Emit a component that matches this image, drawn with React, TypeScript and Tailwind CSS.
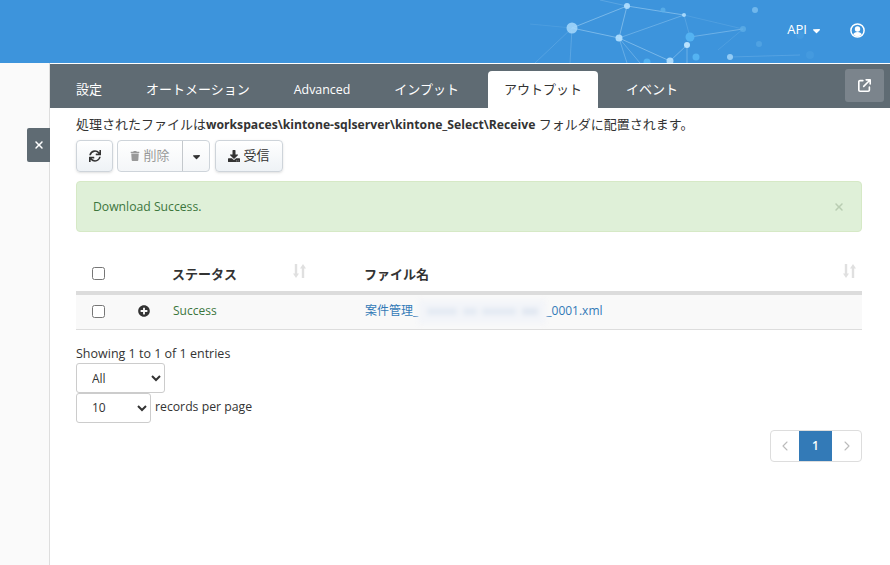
import React from "react";
import { FaSync, FaTrash, FaDownload, FaPlusCircle } from "react-icons/fa";
import { FaCaretDown, FaArrowUpRightFromSquare, FaXmark } from "react-icons/fa6";
import { ChevronLeft, ChevronRight } from "lucide-react";

const tabs = ["設定", "オートメーション", "Advanced", "インプット", "アウトプット", "イベント"];

const font = "font-['Open_Sans','Noto_Sans_CJK_JP',sans-serif]";

// background of the header: small network of dots and lines
const dots: [number, number, number, string, number][] = [
  [572, 28, 5.5, "#a6d8fb", 0.85],
  [627, 6, 3, "#b4e0ff", 0.9],
  [619, 38, 3.5, "#b4e0ff", 0.9],
  [684, 15, 2, "#b4e0ff", 0.85],
  [663, 10, 2.5, "#5cb0ea", 0.8],
  [690, 37, 4.5, "#55b4f2", 0.95],
  [687, 45, 3, "#c0e6ff", 0.95],
  [743, 29, 3, "#5cace6", 0.8],
  [755, 10, 3, "#86c6f2", 0.7],
  [696, 57, 3.5, "#55b4f2", 0.95],
  [670, 61, 3.5, "#b4e0ff", 0.9],
  [647, 62, 3.5, "#55b4f2", 0.9],
  [730, 57, 3, "#a6d8fb", 0.8],
  [759, 44, 3, "#5cace6", 0.6],
  [810, 55, 4, "#5cace6", 0.25],
  [800, 35, 4, "#5cace6", 0.25],
];
const lines: [number, number, number, number, number][] = [
  [572, 28, 627, 6, 0.5],
  [572, 28, 619, 38, 0.5],
  [627, 6, 619, 38, 0.5],
  [627, 6, 684, 15, 0.5],
  [619, 38, 684, 15, 0.35],
  [690, 37, 743, 29, 0.4],
  [684, 15, 743, 29, 0.15],
  [684, 15, 690, 37, 0.2],
  [619, 38, 670, 61, 0.5],
  [619, 38, 627, 63, 0.35],
  [619, 38, 640, 63, 0.35],
  [687, 45, 670, 61, 0.45],
  [687, 45, 687, 63, 0.4],
  [730, 57, 800, 55, 0.2],
  [743, 29, 718, 50, 0.15],
  [572, 28, 570, 63, 0.25],
  [572, 28, 535, 63, 0.2],
  [572, 28, 530, 24, 0.12],
  [627, 6, 600, 0, 0.25],
];

const App = () => {
  return (
    <div className={`${font} h-[565px] w-[890px] overflow-hidden bg-white text-[13px] text-[#333]`}>
      {/* Header */}
      <header className="relative flex h-[63px] items-center justify-end bg-[#3d94dc] text-white">
        <svg className="absolute inset-0 h-[63px] w-[890px] blur-[0.4px]" viewBox="0 0 890 63">
          {lines.map((l, i) => (
            <line key={i} x1={l[0]} y1={l[1]} x2={l[2]} y2={l[3]} stroke="#b4dcf8" strokeOpacity={l[4]} strokeWidth="1" />
          ))}
          {dots.map((d, i) => (
            <circle key={i} cx={d[0]} cy={d[1]} r={d[2]} fill={d[3]} fillOpacity={d[4]} />
          ))}
        </svg>
        <div className="relative flex items-center pb-[3px] pr-[25px]">
          <span className="text-[13px]">API</span>
          <FaCaretDown className="ml-[4px] text-[11px]" />
          <UserIcon />
        </div>
      </header>

      <div className="flex h-[502px]">
        {/* Left gutter */}
        <div className="relative w-[50px] shrink-0 border-r border-[#dedede] bg-[#fafafa] pt-px">
          <button className="absolute left-[27px] top-[65px] flex h-[34px] w-[23px] items-center justify-center rounded-l-[2px] bg-[#5f6b73] text-white">
            <FaXmark className="text-[12px]" />
          </button>
        </div>

        <main className="min-w-0 flex-1 pt-px">
          {/* Tabs */}
          <nav className="flex h-[44px] items-end justify-between bg-[#5f6b73] pl-[10px] pr-[6px]">
            <ul className="flex gap-[12px]">
              {tabs.map((t) => (
                <li
                  key={t}
                  className={
                    t === "アウトプット"
                      ? "ml-px flex h-[37px] items-center rounded-t-[4px] bg-white px-[16px] text-[#333]"
                      : t === "Advanced"
                        ? "flex h-[37px] items-center px-[16px] pt-px text-[12.4px] text-white"
                        : "flex h-[37px] items-center px-[16px] pt-px text-white"
                  }
                >
                  {t}
                </li>
              ))}
            </ul>
            <button className="mb-[6px] flex h-[33px] w-[39px] items-center justify-center rounded-[3px] bg-[#7b848c] text-white">
              <FaArrowUpRightFromSquare className="text-[13px]" />
            </button>
          </nav>

          <div className="px-[26px] pr-[28px]">
            <p className="h-[32px] pt-[7px] leading-[18px]">
              処理されたファイルは<b className="text-[12.2px]">workspaces\kintone-sqlserver\kintone_Select\Receive</b> フォルダに配置されます。
            </p>

            {/* Toolbar */}
            <div className="flex gap-[4px]">
              <button className="flex h-[32px] w-[37px] items-center justify-center rounded-[4px] border border-[#ced4da] bg-gradient-to-b from-white to-[#eef2f6] shadow-sm">
                <FaSync className="text-[12px]" />
              </button>
              <div className="flex h-[32px] rounded-[4px] border border-[#ced4da] bg-gradient-to-b from-white to-[#f4f6f8]">
                <span className="flex w-[65px] items-center justify-center gap-[3px] border-r border-[#c4c8cc] text-[#999]">
                  <FaTrash className="text-[10px]" />
                  削除
                </span>
                <span className="flex w-[26px] items-center justify-center">
                  <FaCaretDown className="text-[11px]" />
                </span>
              </div>
              <button className="ml-px flex h-[32px] w-[68px] items-center justify-center gap-[3px] rounded-[4px] border border-[#ced4da] bg-gradient-to-b from-white to-[#eef2f6] shadow-sm">
                <FaDownload className="text-[12px]" />
                受信
              </button>
            </div>

            {/* Alert */}
            <div className="mt-[9px] flex h-[51px] items-center justify-between rounded-[4px] border border-[#d6e9c6] bg-[#dff0d8] pl-[16px] pr-[16px] pt-px text-[12.2px] text-[#3c763d]">
              <span>Download Success.</span>
              <FaXmark className="text-[12px] text-[#b9cdb2]" />
            </div>

            {/* Table */}
            <table className="mt-[19px] w-full border-collapse">
              <thead>
                <tr className="h-[42px] border-b-[4px] border-[#dcdcdc] text-left">
                  <th className="w-[44px] pl-[16px]">
                    <input type="checkbox" className="mt-[5px] block h-[13px] w-[13px]" />
                  </th>
                  <th className="w-[52px]"></th>
                  <th className="w-[192px] font-bold">
                    <div className="flex items-start justify-between pr-[58px] pt-[8px]">
                      ステータス
                      <SortIcon />
                    </div>
                  </th>
                  <th className="font-bold">
                    <div className="flex items-start justify-between pr-[6px] pt-[8px]">
                      ファイル名
                      <SortIcon />
                    </div>
                  </th>
                </tr>
              </thead>
              <tbody>
                <tr className="h-[36px] border-b border-[#dddddd] bg-[#f9f9f9]">
                  <td className="pl-[16px]">
                    <input type="checkbox" className="block h-[13px] w-[13px]" />
                  </td>
                  <td className="pb-px pl-[18px]">
                    <FaPlusCircle className="text-[12px] text-[#333]" />
                  </td>
                  <td className="pb-[2px] pl-px text-[12px] text-[#3c763d]">Success</td>
                  <td className="pl-px text-[#337ab7]">
                    <span className="flex items-center text-[12px]">
                      <span className="pb-[2px]">案件管理_</span>
                      {/* blurred part of the file name */}
                      <span className="flex h-[24px] w-[128px] items-center justify-around bg-[#f3f5f9] px-[6px] blur-[2.5px]">
                        <span className="h-[7px] w-[30px] bg-[#e4eaf3]"></span>
                        <span className="h-[7px] w-[14px] bg-[#e4eaf3]"></span>
                        <span className="h-[7px] w-[34px] bg-[#e4eaf3]"></span>
                        <span className="h-[7px] w-[16px] bg-[#e0e7f1]"></span>
                      </span>
                      <span className="pb-[2px]">_0001.xml</span>
                    </span>
                  </td>
                </tr>
              </tbody>
            </table>

            {/* Footer of the table */}
            <div className="mt-[15px] text-[12.5px] leading-[18px]">Showing 1 to 1 of 1 entries</div>
            <select className="block h-[30px] w-[89px] rounded-[3px] border border-[#ccc] bg-white pl-[11px] pt-px text-[12px]">
              <option>All</option>
            </select>
            <div className="flex items-center gap-[4px]">
              <select className="block h-[30px] w-[75px] rounded-[3px] border border-[#ccc] bg-white pl-[11px] text-[12px]">
                <option>10</option>
              </select>
              <span className="-mt-[1px] text-[12.25px]">records per page</span>
            </div>

            {/* Pagination */}
            <div className="mt-[7px] flex justify-end">
              <div className="flex h-[32px] overflow-hidden rounded-[4px] border border-[#ddd]">
                <span className="flex w-[28px] items-center justify-center text-[#bbb]">
                  <ChevronLeft size={16} strokeWidth={1.6} />
                </span>
                <span className="flex w-[33px] items-center justify-center bg-[#337ab7] text-[12px] font-semibold text-white">1</span>
                <span className="flex w-[29px] items-center justify-center text-[#bbb]">
                  <ChevronRight size={16} strokeWidth={1.6} />
                </span>
              </div>
            </div>
          </div>
        </main>
      </div>
    </div>
  );
};

const UserIcon = () => (
  <svg width="15" height="15" viewBox="0 0 15 15" className="ml-[28px]" fill="white">
    <circle cx="7.5" cy="7.5" r="6.6" fill="none" stroke="white" strokeWidth="1.5" />
    <circle cx="7.5" cy="6" r="2.7" />
    <path d="M3.2 11.6c.5-1.8 2-2.7 4.3-2.7s3.800.9 4.300 2.700c-1.100 1.100-2.600 1.800-4.300 1.800s-3.200-.7-4.300-1.800z" />
  </svg>
);

const SortIcon = () => (
  <svg width="13" height="14" viewBox="0 0 13 14" className="-mt-[1px] text-[#e0e0e0]" fill="currentColor">
    <path d="M1.8 0h2.400v9.500h1.800L3 14 0 9.500h1.800z" />
    <path d="M8.800 14h2.400V4.500H13L10 0 7 4.500h1.800z" />
  </svg>
);

export default App;
